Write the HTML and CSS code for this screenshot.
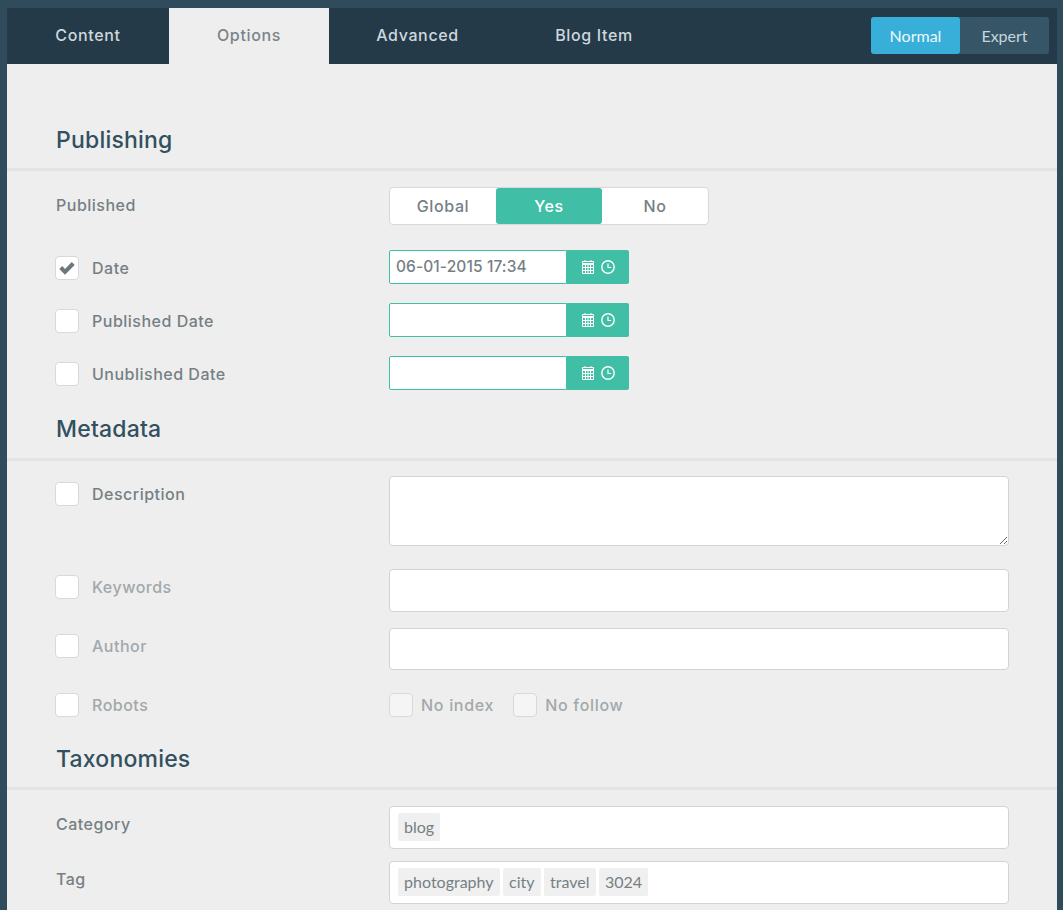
FILE: index.html
```html
<!DOCTYPE html>
<html lang="en">
<head>
    <meta charset="UTF-8">
    <title>Article options</title>
    <link rel="stylesheet" href="styles.css">
</head>
<body>
<div class="panel">
    <!-- tabs -->
    <div class="tabbar">
        <a class="tab tab-content">Content</a>
        <a class="tab tab-options active">Options</a>
        <a class="tab tab-advanced">Advanced</a>
        <a class="tab tab-blog">Blog Item</a>
        <div class="mode">
            <span class="mode-btn on">Normal</span>
            <span class="mode-btn">Expert</span>
        </div>
    </div>

    <!-- publishing -->
    <h2 class="heading first">Publishing</h2>
    <div class="row row-published">
        <label class="label plain">Published</label>
        <div class="switch">
            <span class="switch-item global">Global</span>
            <span class="switch-item yes">Yes</span>
            <span class="switch-item no">No</span>
        </div>
    </div>
    <div class="row row-date">
        <label class="label"><span class="check"><svg class="tick" viewBox="0 0 16 13"><path d="M0.3 7 L3.2 4.1 L6 6.9 L12.8 0.1 L15.7 3 L6 12.7 Z"/></svg></span>Date</label>
        <div class="date">
            <div class="date-input">06-01-2015 17:34</div>
            <div class="date-btn">
                <svg class="ico" viewBox="0 0 12 14"><path d="M0.5 1.5 H11.5 V13.5 H0.5 Z M0.5 3.5 H11.5 M0.5 4.5 H11.5 M0.5 7.5 H11.5 M0.5 10.5 H11.5 M3.5 4.5 V13.5 M6 4.5 V13.5 M8.5 4.5 V13.5 M3 0 V2 M9 0 V2" fill="none" stroke="#fff" stroke-width="1"/></svg>
                <svg class="ico" viewBox="0 0 14 14"><circle cx="7" cy="7" r="6.2" fill="none" stroke="#fff" stroke-width="1.4"/><path d="M7 3.5 V7.5 H10.2" fill="none" stroke="#fff" stroke-width="1.2"/></svg>
            </div>
        </div>
    </div>
    <div class="row row-date">
        <label class="label"><span class="check"></span>Published Date</label>
        <div class="date">
            <div class="date-input"></div>
            <div class="date-btn">
                <svg class="ico" viewBox="0 0 12 14"><path d="M0.5 1.5 H11.5 V13.5 H0.5 Z M0.5 3.5 H11.5 M0.5 4.5 H11.5 M0.5 7.5 H11.5 M0.5 10.5 H11.5 M3.5 4.5 V13.5 M6 4.5 V13.5 M8.5 4.5 V13.5 M3 0 V2 M9 0 V2" fill="none" stroke="#fff" stroke-width="1"/></svg>
                <svg class="ico" viewBox="0 0 14 14"><circle cx="7" cy="7" r="6.2" fill="none" stroke="#fff" stroke-width="1.4"/><path d="M7 3.5 V7.5 H10.2" fill="none" stroke="#fff" stroke-width="1.2"/></svg>
            </div>
        </div>
    </div>
    <div class="row row-date">
        <label class="label"><span class="check"></span>Unublished Date</label>
        <div class="date">
            <div class="date-input"></div>
            <div class="date-btn">
                <svg class="ico" viewBox="0 0 12 14"><path d="M0.5 1.5 H11.5 V13.5 H0.5 Z M0.5 3.5 H11.5 M0.5 4.5 H11.5 M0.5 7.5 H11.5 M0.5 10.5 H11.5 M3.5 4.5 V13.5 M6 4.5 V13.5 M8.5 4.5 V13.5 M3 0 V2 M9 0 V2" fill="none" stroke="#fff" stroke-width="1"/></svg>
                <svg class="ico" viewBox="0 0 14 14"><circle cx="7" cy="7" r="6.2" fill="none" stroke="#fff" stroke-width="1.4"/><path d="M7 3.5 V7.5 H10.2" fill="none" stroke="#fff" stroke-width="1.2"/></svg>
            </div>
        </div>
    </div>

    <!-- metadata -->
    <h2 class="heading">Metadata</h2>
    <div class="row row-desc">
        <label class="label"><span class="check"></span>Description</label>
        <textarea class="textbox"></textarea>
    </div>
    <div class="row row-keywords">
        <label class="label muted"><span class="check"></span>Keywords</label>
        <input type="text" class="textfield">
    </div>
    <div class="row row-author">
        <label class="label muted"><span class="check"></span>Author</label>
        <input type="text" class="textfield author">
    </div>
    <div class="row row-robots">
        <label class="label muted"><span class="check"></span>Robots</label>
        <div class="robots">
            <label class="robot"><span class="check off"></span>No index</label>
            <label class="robot"><span class="check off"></span>No follow</label>
        </div>
    </div>

    <!-- taxonomies -->
    <h2 class="heading tax">Taxonomies</h2>
    <div class="row row-category">
        <label class="label plain tall">Category</label>
        <div class="tagbox"><span class="tag">blog</span></div>
    </div>
    <div class="row row-tag">
        <label class="label plain tall">Tag</label>
        <div class="tagbox">
            <span class="tag">photography</span>
            <span class="tag">city</span>
            <span class="tag">travel</span>
            <span class="tag">3024</span>
        </div>
    </div>
</div>
</body>
</html>
```

FILE: styles.css
```css
html, body {
    margin: 0;
    height: 910px;
    overflow: hidden;
}
body {
    background: #304c5c;
    padding: 8px 6px 0 7px;
    box-sizing: border-box;
    font-family: "Inter", "Liberation Sans", sans-serif;
    color: #767f84;
}
.panel {
    background: #eee;
    height: 902px;
}

/* tabs */
.tabbar {
    display: flex;
    height: 56px;
    background: #253a48;
}
.tab {
    display: block;
    padding-top: 18px;
    box-sizing: border-box;
    text-align: center;
    font-size: 16px;
    font-weight: 450;
    letter-spacing: 0.65px;
    line-height: 19px;
    color: #cdd7dd;
}
.tab-content { width: 162px; }
.tab-options { width: 160px; }
.tab-advanced { width: 177px; }
.tab-blog { width: 176px; }
.tab.active {
    background: #eee;
    color: #7b8488;
}
.mode {
    display: flex;
    margin: 9px 8px 0 auto;
    height: 37px;
    border-radius: 3px;
    background: #365567;
    font-family: "Lato", sans-serif;
    font-size: 16px;
    line-height: 38px;
}
.mode-btn {
    width: 89px;
    text-align: center;
    color: #c7d5de;
    border-radius: 3px;
}
.mode-btn.on {
    background: #38afd8;
    color: #eef8fc;
}

/* section heading */
.heading {
    margin: 0;
    height: 71px;
    padding: 25px 0 0 49px;
    border-bottom: 3px solid #e3e3e3;
    box-sizing: border-box;
    font-size: 23px;
    font-weight: 500;
    line-height: 28px;
    letter-spacing: 0.2px;
    color: #33505f;
}
.heading.first {
    margin-top: 46px;
    height: 61px;
    padding-top: 16px;
}
.heading.tax {
    height: 73px;
    padding-top: 28px;
}

/* form rows */
.row {
    display: grid;
    grid-template-columns: 334px 620px;
    padding-left: 48px;
    margin-top: 17px;
}
.row-published { margin-top: 16px; height: 38px; }
.row-date { margin-top: 19px; height: 34px; }
.row-published + .row-date { margin-top: 25px; }
.row-desc { margin-top: 15px; height: 70px; }
.row-keywords { margin-top: 23px; height: 43px; }
.row-author { margin-top: 16px; height: 42px; }
.row-robots { margin-top: 23px; height: 24px; }
.row-category { margin-top: 16px; height: 43px; }
.row-tag { margin-top: 12px; height: 43px; }

.label {
    display: flex;
    align-items: center;
    height: 24px;
    font-size: 16px;
    font-weight: 450;
    letter-spacing: 0.5px;
    color: #767f84;
}
.row-published .label { height: 36px; }
.row-date .label { margin-top: 6px; }
.row-desc .label { margin-top: 6px; }
.row-keywords .label { margin-top: 6px; }
.row-author .label { margin-top: 6px; }
.label.muted { color: #a2a8ab; }
.label.plain { padding-left: 1px; }
.label.tall { height: 36px; }

.check {
    display: flex;
    align-items: center;
    justify-content: center;
    flex: none;
    width: 24px;
    height: 24px;
    box-sizing: border-box;
    margin-right: 13px;
    background: #fff;
    border: 1px solid #d9d9d9;
    border-radius: 4px;
}
.check.off {
    background: #f5f5f5;
    margin-right: 8px;
}
.tick {
    width: 16px;
    height: 13px;
    fill: #6e777c;
}

/* global / yes / no */
.switch {
    display: flex;
    width: 320px;
    height: 38px;
    box-sizing: border-box;
    background: #fff;
    border: 1px solid #d8d8d8;
    border-radius: 4px;
    font-size: 16px;
    font-weight: 450;
    letter-spacing: 0.6px;
    line-height: 36px;
    text-align: center;
    color: #767f84;
}
.switch-item { width: 106px; }
.switch-item.yes {
    background: #40bfa6;
    color: #fff;
    font-weight: 500;
    border-radius: 3px;
}

/* date field */
.date {
    display: flex;
    width: 240px;
    height: 34px;
}
.date-input {
    width: 178px;
    box-sizing: border-box;
    padding-left: 6px;
    background: #fff;
    border: 1px solid #40bfa6;
    border-radius: 2px 0 0 2px;
    font-size: 15.5px;
    font-weight: 450;
    letter-spacing: 0.1px;
    line-height: 32px;
}
.date-btn {
    display: flex;
    align-items: center;
    gap: 7px;
    width: 62px;
    padding-left: 15px;
    box-sizing: border-box;
    background: #40bfa6;
    border-radius: 0 2px 2px 0;
}
.ico {
    width: 12px;
    height: 14px;
}
.ico + .ico {
    width: 14px;
}

/* text inputs */
.textbox, .textfield, .tagbox {
    display: block;
    width: 620px;
    box-sizing: border-box;
    margin: 0;
    background: #fff;
    border: 1px solid #d3d3d3;
    border-radius: 4px;
}
.textbox { height: 70px; }
.textfield { height: 43px; }
.textfield.author { height: 42px; }

.robots {
    display: flex;
    gap: 19px;
}
.robot {
    display: flex;
    align-items: center;
    font-size: 16px;
    font-weight: 450;
    letter-spacing: 0.7px;
    color: #a2a8ab;
}

/* tags */
.tagbox {
    display: flex;
    align-items: flex-start;
    gap: 3.3px;
    height: 43px;
    padding: 6px 8px;
    font-family: "Lato", sans-serif;
    font-size: 16px;
    line-height: 28px;
    color: #767f84;
}
.tag {
    padding: 0 6.1px;
    background: #f0f0f0;
    border-radius: 2px;
}
```
